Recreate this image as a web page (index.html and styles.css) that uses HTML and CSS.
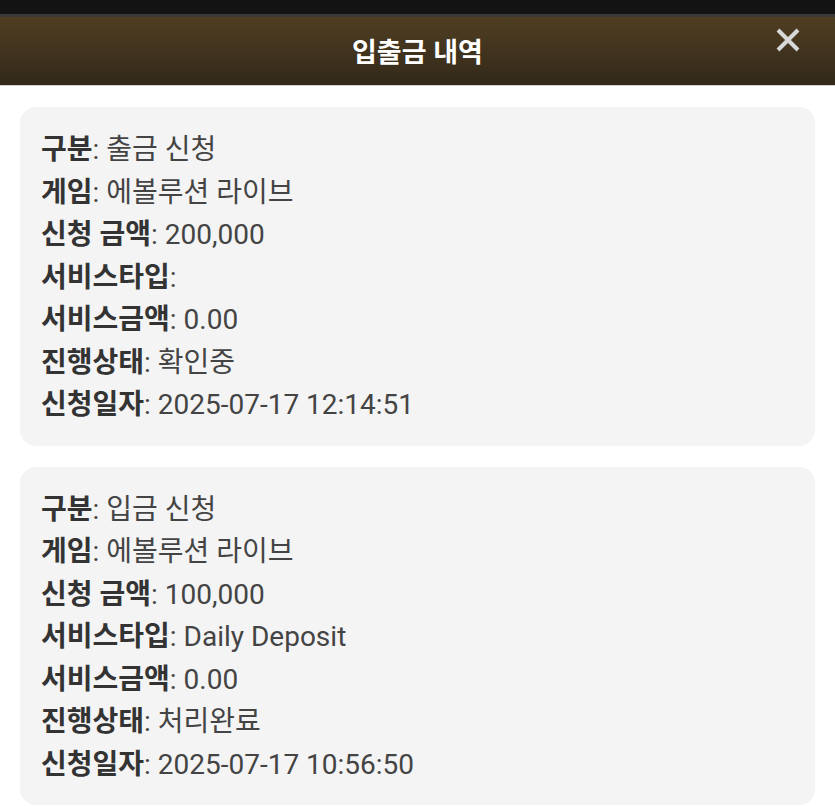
FILE: index.html
```html
<!DOCTYPE html>
<html>
<head>
	<meta name="viewport" content="width=device-width, initial-scale=1">
	<link rel="stylesheet" href="styles.css">
</head>
<body>
	<div class="status_bar"></div>
	<header class="popup_head">
		<h1>입출금 내역</h1>
		<div class="btn_close">
			<svg width="24" height="24" viewBox="0 0 24 24"><path d="M2 2 L22 22 M22 2 L2 22" stroke="#d8d8d8" stroke-width="4" fill="none"/></svg>
		</div>
	</header>
	<main class="history">
		<div class="item">
			<p><b>구분</b>: 출금 신청</p>
			<p><b>게임</b>: 에볼루션 라이브</p>
			<p><b>신청 금액</b>: 200,000</p>
			<p><b>서비스타입</b>: </p>
			<p><b>서비스금액</b>: 0.00</p>
			<p><b>진행상태</b>: 확인중</p>
			<p><b>신청일자</b>: 2025-07-17 12:14:51</p>
		</div>
		<div class="item">
			<p><b>구분</b>: 입금 신청</p>
			<p><b>게임</b>: 에볼루션 라이브</p>
			<p><b>신청 금액</b>: 100,000</p>
			<p><b>서비스타입</b>: Daily Deposit</p>
			<p><b>서비스금액</b>: 0.00</p>
			<p><b>진행상태</b>: 처리완료</p>
			<p><b>신청일자</b>: 2025-07-17 10:56:50</p>
		</div>
	</main>
</body>
</html>
```
FILE: styles.css
```css
body {
	margin:0;
	background:#fff;
	font-family: Roboto, "Noto Sans CJK KR", sans-serif;
	color:#444;
	overflow:hidden;
}

.status_bar {
	height:14px;
	background:#131313;
	border-bottom:3px solid #3c3a36;
}

.popup_head {
	position:relative;
	height:68px;
	background:linear-gradient(#4f3e22, #33291a);
	border-bottom:1px solid #d6d3cc;
	display:flex;
	align-items:center;
	justify-content:center;
}

.popup_head h1 {
	margin:0;
	margin-top:-2px;
	font-size:27px;
	font-weight:bold;
	color:#fff;
}

.btn_close {
	position:absolute;
	right:35px;
	top:11px;
	width:24px;
	height:24px;
}

.btn_close svg {
	display:block;
}

.history {
	padding:21px 20px 0;
	display:flex;
	flex-direction:column;
	gap:21px;
}

.item {
	background:#f4f4f4;
	border-radius:16px;
	padding:22px 21px 19px;
}

.item p {
	margin:0;
	font-size:28px;
	line-height:42.5px;
	white-space:nowrap;
}

.item b {
	font-weight:bold;
	color:#333;
}
```
